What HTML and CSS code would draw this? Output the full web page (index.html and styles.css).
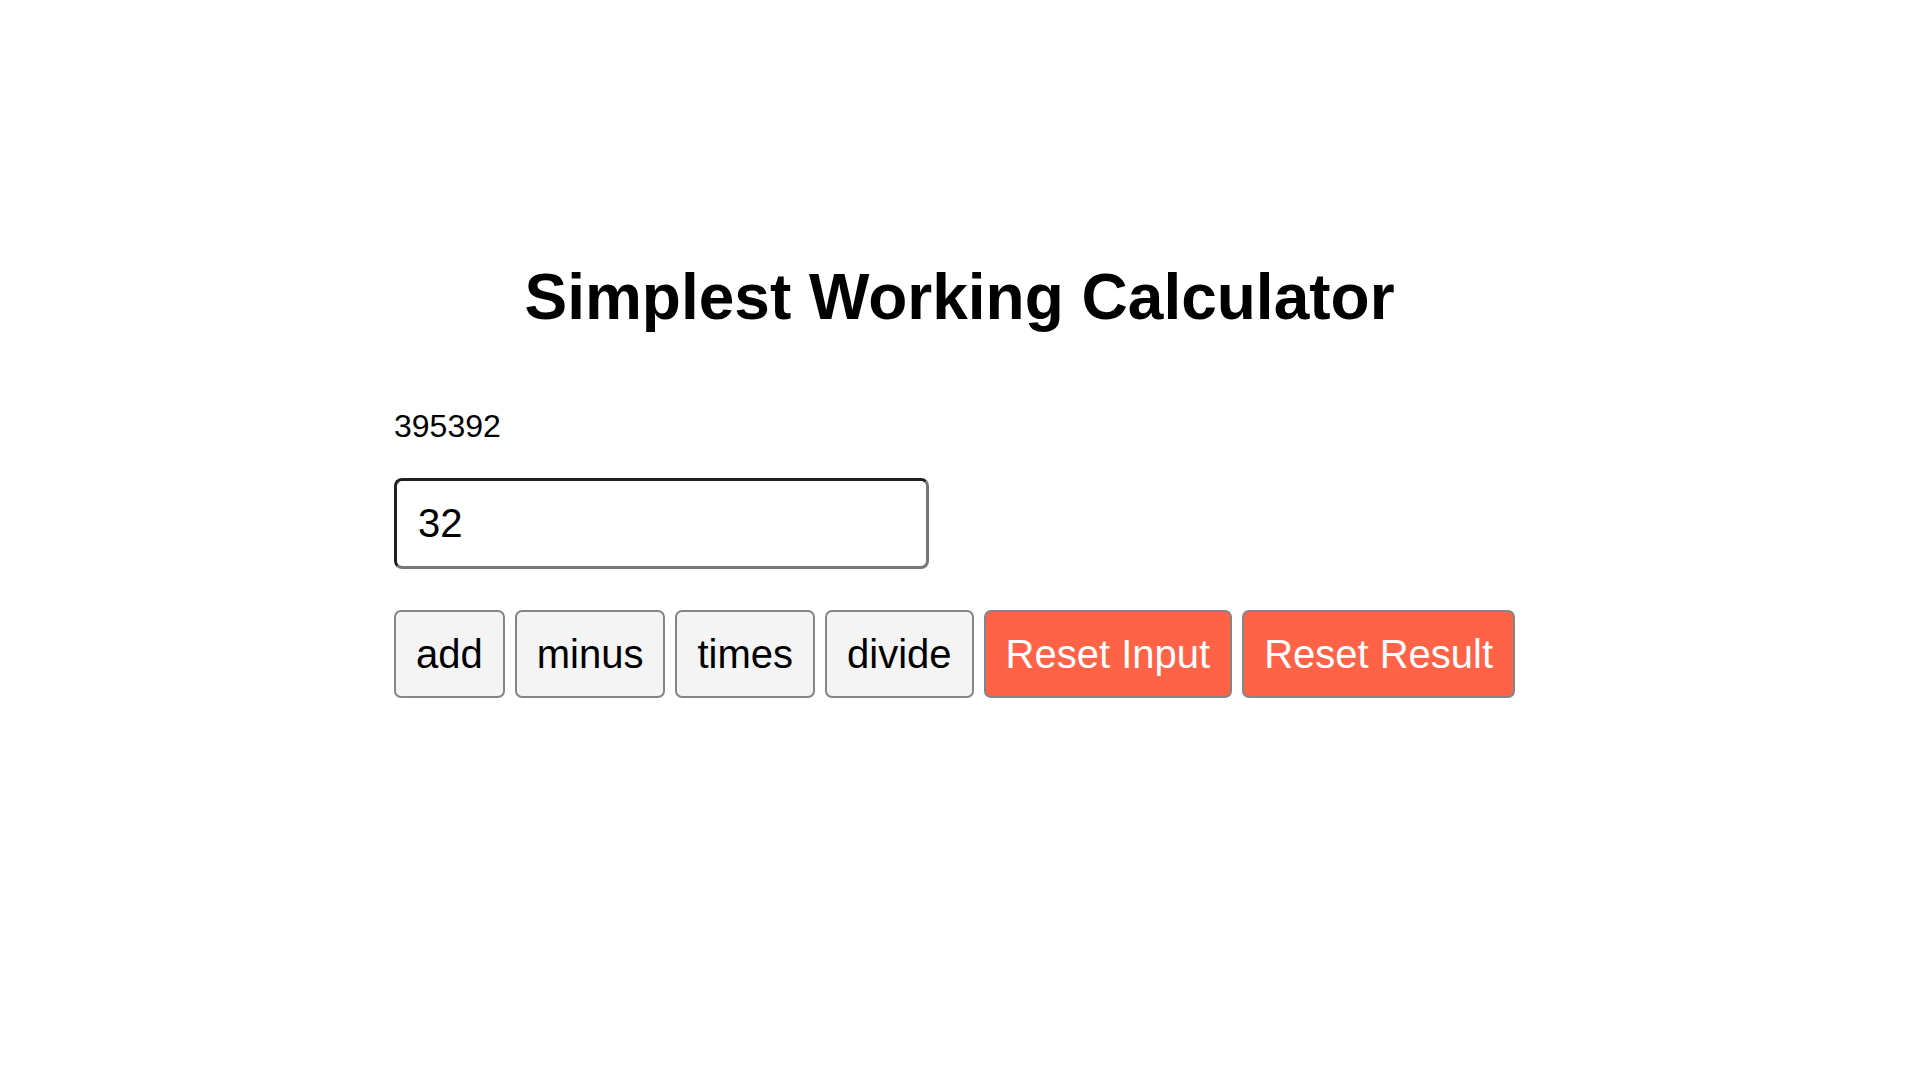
FILE: index.html
```html
<!DOCTYPE html>
<html lang="en">
<head>
<meta charset="utf-8">
<title>Simplest Working Calculator</title>
<link rel="stylesheet" href="styles.css">
</head>
<body>
<main class="calc">
  <h1 class="calc-title">Simplest Working Calculator</h1>
  <p class="calc-result">395392</p>
  <input class="calc-input" type="number" value="32">
  <div class="calc-buttons">
    <button class="btn">add</button>
    <button class="btn">minus</button>
    <button class="btn">times</button>
    <button class="btn">divide</button>
    <button class="btn btn-reset">Reset Input</button>
    <button class="btn btn-reset">Reset Result</button>
  </div>
</main>
</body>
</html>
```

FILE: styles.css
```css
html, body {
  margin: 0;
  padding: 0;
  background: #ffffff;
}

body {
  font-family: "Liberation Sans", Arial, sans-serif;
  color: #000;
}

.calc {
  width: 1131px;
  margin: 0 auto;
  padding-top: 260px;
}

.calc-title {
  margin: 0;
  font-size: 64px;
  font-weight: bold;
  text-align: center;
  line-height: normal;
}

.calc-result {
  margin: 74px 0 0;
  font-size: 32px;
  line-height: normal;
}

.calc-input {
  display: block;
  box-sizing: border-box;
  width: 535px;
  margin-top: 33px;
  padding: 20px 20px 20px 21px;
  font-family: "Liberation Sans", Arial, sans-serif;
  font-size: 40px;
  line-height: normal;
  border-width: 3px;
  border-style: solid;
  border-color: #202020 #777777 #777777 #202020;
  border-radius: 8px;
  outline: none;
  color: #000;
  -moz-appearance: textfield;
}

.calc-input::-webkit-outer-spin-button,
.calc-input::-webkit-inner-spin-button {
  -webkit-appearance: none;
  margin: 0;
}

.calc-buttons {
  display: flex;
  gap: 10px;
  margin-top: 41px;
}

.btn {
  font-family: "Liberation Sans", Arial, sans-serif;
  font-size: 40px;
  line-height: normal;
  padding: 19.5px 20px;
  background: #f4f4f4;
  color: #000;
  border: 2px solid #858585;
  border-radius: 7px;
  cursor: pointer;
}

.btn-reset {
  background: #ff6347;
  color: #ffffff;
}
```
